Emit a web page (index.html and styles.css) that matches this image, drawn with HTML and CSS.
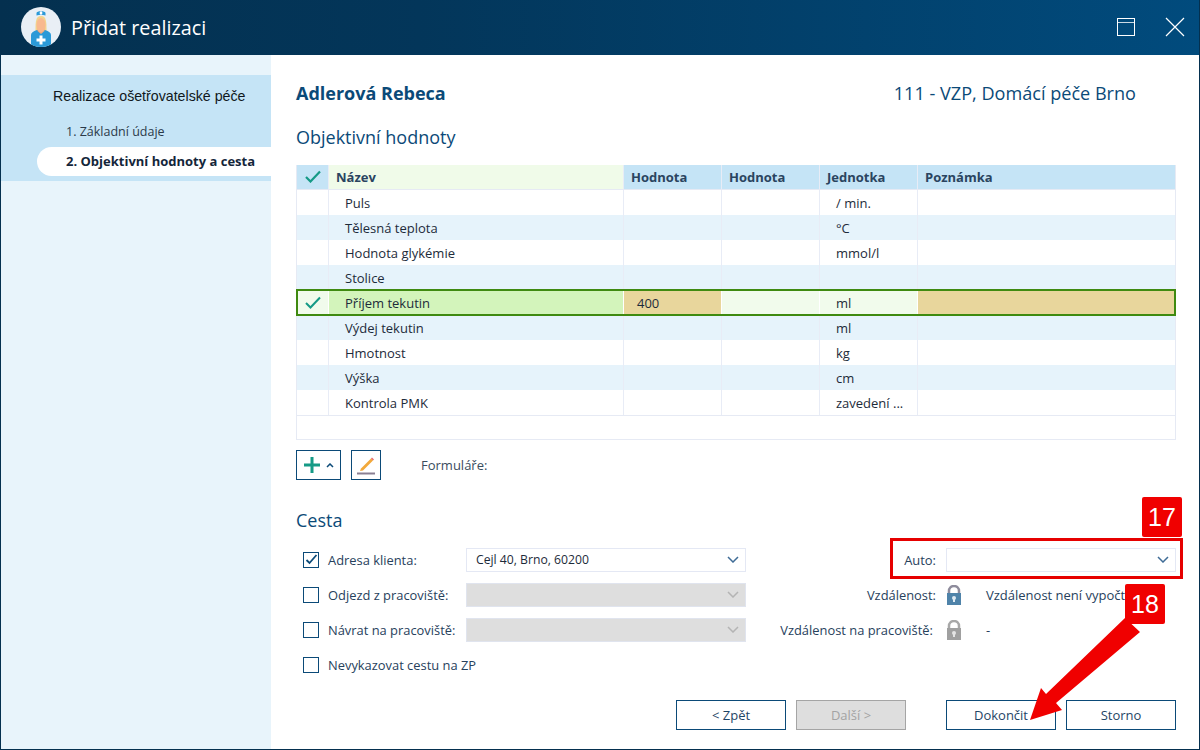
FILE: index.html
```html
<!DOCTYPE html>
<html lang="cs">
<head>
<meta charset="utf-8">
<title>Přidat realizaci</title>
<link rel="stylesheet" href="styles.css">
</head>
<body>
<div class="window">
  <header class="titlebar">
    <svg class="avatar" width="40" height="40" viewBox="0 0 40 40">
      <defs><clipPath id="round"><circle cx="20" cy="20" r="20"/></clipPath></defs>
      <circle cx="20" cy="20" r="20" fill="#e9eff5"/>
      <g clip-path="url(#round)">
        <path d="M14.500 24c0-9 0-15 5.500-15s5.500 6 5.500 15z" fill="#f3d48c"/>
        <path d="M10 28c0-2 2-4 6-5h8c4 1 6 3 6 5v12H10z" fill="#2b9ad8"/>
        <path d="M16.500 21h7v3l-3.500 3-3.500-3z" fill="#f3a97f"/>
        <ellipse cx="20" cy="18" rx="4.500" ry="7" fill="#f8b98f"/>
        <path d="M18.500 28.500h3v3h3v3h-3v3h-3v-3h-3v-3h3z" fill="#fff"/>
        <path d="M15.500 6c0-2.500 9-2.500 9 0v2.500c-3-1-6-1-9 0z" fill="#2b9ad8"/>
        <path d="M19 4.500h2v3h-2zM18.500 5.500h3v1h-3z" fill="#fff"/>
      </g>
    </svg>
    <h1 class="title">Přidat realizaci</h1>
    <div class="window-controls">
      <svg width="18" height="18" viewBox="0 0 18 18" fill="none" stroke="#fff">
        <rect x="0.500" y="0.500" width="17" height="17" stroke-width="1"/>
        <path d="M1 4.500h16" stroke-width="1" opacity=".8"/>
      </svg>
      <svg width="20" height="20" viewBox="0 0 20 20" fill="none" stroke="#fff" stroke-width="1.200">
        <path d="M1 1l18 18M19 1L1 19"/>
      </svg>
    </div>
  </header>

  <div class="body">
    <aside class="sidebar">
      <nav class="steps">
        <div class="steps-title">Realizace ošetřovatelské péče</div>
        <div class="step">1. Základní údaje</div>
        <div class="step step-active">2. Objektivní hodnoty a cesta</div>
      </nav>
    </aside>

    <main class="content">
      <div class="patient">
        <div class="patient-name">Adlerová Rebeca</div>
        <div class="patient-info">111 - VZP, Domácí péče Brno</div>
      </div>
      <h2 class="section-title">Objektivní hodnoty</h2>

      <div class="table">
        <div class="row row-head">
          <div class="cell cell-check">
            <svg width="16" height="13" viewBox="0 0 16 13" fill="none" stroke="#159a86" stroke-width="2.200"><path d="M1 7l4.500 4.500L15 1.500"/></svg>
          </div>
          <div class="cell cell-sorted">Název</div>
          <div class="cell">Hodnota</div>
          <div class="cell">Hodnota</div>
          <div class="cell">Jednotka</div>
          <div class="cell">Poznámka</div>
        </div>
        <div class="row"><div class="cell"></div><div class="cell cell-name">Puls</div><div class="cell"></div><div class="cell"></div><div class="cell cell-name">/ min.</div><div class="cell"></div></div>
        <div class="row row-alt"><div class="cell"></div><div class="cell cell-name">Tělesná teplota</div><div class="cell"></div><div class="cell"></div><div class="cell cell-name">°C</div><div class="cell"></div></div>
        <div class="row"><div class="cell"></div><div class="cell cell-name">Hodnota glykémie</div><div class="cell"></div><div class="cell"></div><div class="cell cell-name">mmol/l</div><div class="cell"></div></div>
        <div class="row row-alt"><div class="cell"></div><div class="cell cell-name">Stolice</div><div class="cell"></div><div class="cell"></div><div class="cell cell-name"></div><div class="cell"></div></div>
        <div class="row row-selected">
          <div class="cell cell-check cell-pale">
            <svg width="16" height="13" viewBox="0 0 16 13" fill="none" stroke="#159a86" stroke-width="2"><path d="M1 7l4.500 4.500L15 1.500"/></svg>
          </div>
          <div class="cell cell-name cell-green">Příjem tekutin</div>
          <div class="cell cell-value cell-tan">400</div>
          <div class="cell cell-pale"></div>
          <div class="cell cell-name cell-pale">ml</div>
          <div class="cell cell-tan"></div>
        </div>
        <div class="row row-alt"><div class="cell"></div><div class="cell cell-name">Výdej tekutin</div><div class="cell"></div><div class="cell"></div><div class="cell cell-name">ml</div><div class="cell"></div></div>
        <div class="row"><div class="cell"></div><div class="cell cell-name">Hmotnost</div><div class="cell"></div><div class="cell"></div><div class="cell cell-name">kg</div><div class="cell"></div></div>
        <div class="row row-alt"><div class="cell"></div><div class="cell cell-name">Výška</div><div class="cell"></div><div class="cell"></div><div class="cell cell-name">cm</div><div class="cell"></div></div>
        <div class="row"><div class="cell"></div><div class="cell cell-name">Kontrola PMK</div><div class="cell"></div><div class="cell"></div><div class="cell cell-name">zavedení ...</div><div class="cell"></div></div>
        <div class="table-empty"></div>
      </div>

      <div class="toolbar">
        <button class="tool tool-add" type="button">
          <svg width="18" height="18" viewBox="0 0 18 18" fill="none" stroke="#159a86" stroke-width="3"><path d="M9 1v16M1 9h16"/></svg>
          <svg width="8" height="5" viewBox="0 0 8 5" fill="none" stroke="#0b4a78" stroke-width="1.500"><path d="M1 4l3-3 3 3"/></svg>
        </button>
        <button class="tool tool-edit" type="button">
          <svg width="20" height="20" viewBox="0 0 20 20">
            <path d="M5 13.500L15 3.500l2 2-10 10-3 .5z" fill="#f2a93b"/>
            <path d="M15 3.500l1-1 2 2-1 1z" fill="#e8686e"/>
            <path d="M1 18.500h18" stroke="#8a7f92" stroke-width="2"/>
          </svg>
        </button>
        <span class="forms-label">Formuláře:</span>
      </div>

      <h2 class="section-title section-route">Cesta</h2>

      <div class="route">
        <label class="check-label"><span class="checkbox">
          <svg width="13" height="11" viewBox="0 0 13 11" fill="none" stroke="#0b4a78" stroke-width="1.800"><path d="M1.500 6l3 3 7-8"/></svg>
        </span>Adresa klienta:</label>
        <div class="select">Cejl 40, Brno, 60200<svg class="chev" width="12" height="7" viewBox="0 0 12 7" fill="none" stroke="#3f6c96" stroke-width="1.500"><path d="M1 1l5 5 5-5"/></svg></div>
        <div class="field-label">Auto:</div>
        <div class="select"><svg class="chev" width="12" height="7" viewBox="0 0 12 7" fill="none" stroke="#3f6c96" stroke-width="1.500"><path d="M1 1l5 5 5-5"/></svg></div>

        <label class="check-label"><span class="checkbox"></span>Odjezd z pracoviště:</label>
        <div class="select select-disabled"><svg class="chev" width="12" height="7" viewBox="0 0 12 7" fill="none" stroke="#b4b4b4" stroke-width="1.500"><path d="M1 1l5 5 5-5"/></svg></div>
        <div class="field-label">Vzdálenost:</div>
        <div class="lock-value">
          <svg class="lock" width="16" height="20" viewBox="0 0 16 20"><path d="M3 9V6a5 5 0 0 1 10 0v3" fill="none" stroke="#8e8c9c" stroke-width="2.500"/><rect x="1" y="8" width="14" height="12" fill="#4f83a9"/><circle cx="8" cy="13" r="2" fill="#dfeaf2"/><path d="M7 13h2v4H7z" fill="#dfeaf2"/></svg>
          <span>Vzdálenost není vypočtena</span>
        </div>

        <label class="check-label"><span class="checkbox"></span>Návrat na pracoviště:</label>
        <div class="select select-disabled"><svg class="chev" width="12" height="7" viewBox="0 0 12 7" fill="none" stroke="#b4b4b4" stroke-width="1.500"><path d="M1 1l5 5 5-5"/></svg></div>
        <div class="field-label field-label-tight">Vzdálenost na pracoviště:</div>
        <div class="lock-value">
          <svg class="lock" width="16" height="20" viewBox="0 0 16 20"><path d="M3 9V6a5 5 0 0 1 10 0v3" fill="none" stroke="#a8a8a8" stroke-width="2.500"/><rect x="1" y="8" width="14" height="12" fill="#a0a0a0"/><circle cx="8" cy="13" r="2" fill="#e4e4e4"/><path d="M7 13h2v4H7z" fill="#e4e4e4"/></svg>
          <span>-</span>
        </div>

        <label class="check-label check-wide"><span class="checkbox"></span>Nevykazovat cestu na ZP</label>
      </div>

      <div class="actions">
        <button class="btn" type="button">&lt; Zpět</button>
        <button class="btn btn-disabled" type="button">Další &gt;</button>
        <button class="btn btn-finish" type="button">Dokončit</button>
        <button class="btn" type="button">Storno</button>
      </div>
    </main>
  </div>

  <div class="note-box"></div>
  <div class="note-badge note-17">17</div>
  <svg class="note-arrow" width="1200" height="750" viewBox="0 0 1200 750">
    <polygon points="1030,720 1041,688 1046,694 1125,618 1140,632 1056,703 1062,710" fill="#f00000"/>
  </svg>
  <div class="note-badge note-18">18</div>
</div>
</body>
</html>
```
FILE: styles.css
```css
* { box-sizing: border-box; }
html, body { margin: 0; padding: 0; }
body {
  font-family: "Open Sans", sans-serif;
  font-size: 13px;
  color: #1d2b3a;
  background: #fff;
}
.window {
  position: relative;
  width: 1200px;
  height: 750px;
  overflow: hidden;
  display: flex;
  flex-direction: column;
  border-left: 1px solid #04304f;
  border-right: 1px solid #04304f;
  border-bottom: 1px solid #04304f;
}
.titlebar {
  flex: 0 0 55px;
  margin: 0 -1px;
  display: flex;
  align-items: center;
  padding: 0 15px 1px 21px;
  background: linear-gradient(90deg, #04304f 0%, #03365a 35%, #014b7d 100%);
}
.avatar { flex: none; }
.title {
  margin: 0 0 0 10px;
  font-size: 19.800px;
  font-weight: 400;
  color: #fff;
}
.window-controls {
  margin-left: auto;
  display: flex;
  align-items: center;
  gap: 30px;
}
.body { flex: 1; display: flex; min-height: 0; }
.sidebar {
  flex: 0 0 270px;
  padding-top: 20px;
  background: #e8f4fb;
}
.steps {
  height: 106px;
  padding: 13px 0 0 36px;
  background: #c5e4f6;
}
.steps-title {
  padding-left: 16px;
  height: 17px;
  line-height: 17px;
  font-family: "Liberation Sans", sans-serif;
  font-size: 14.200px;
  color: #101820;
}
.step {
  margin-top: 18px;
  padding-left: 29px;
  height: 18px;
  line-height: 18px;
  font-size: 12.500px;
  color: #2b3a4a;
}
.step-active {
  margin-top: 6px;
  height: 29px;
  line-height: 29px;
  border-radius: 15px 0 0 15px;
  background: #fff;
  font-weight: 700;
  font-size: 13px;
  color: #14263a;
}
.content {
  flex: 1;
  min-width: 0;
  padding: 25px 23px 0 25px;
  display: flex;
  flex-direction: column;
}
.patient {
  display: flex;
  justify-content: space-between;
  align-items: center;
  height: 26px;
  padding-right: 40px;
}
.patient-name {
  font-size: 18px;
  font-weight: 700;
  color: #0b4a78;
}
.patient-info {
  font-size: 18.100px;
  color: #0b4a78;
}
.section-title {
  margin: 19px 0 0;
  height: 24px;
  line-height: 24px;
  font-size: 18px;
  font-weight: 400;
  color: #0b4a78;
}
.table {
  margin-top: 16px;
  height: 275px;
  flex: none;
  border: 1px solid #e6eaf4;
  border-top: 0;
  background: #fff;
}
.row {
  display: grid;
  grid-template-columns: 32px 295px 98px 98px 98px 1fr;
  height: 25px;
  position: relative;
}
.row-head {
  height: 25px;
  background: #c5e4f6;
  border-bottom: 1px solid #e6eaf4;
  font-weight: 700;
  color: #2a4460;
}
.row-alt { background: #e6f3fb; }
.cell {
  display: flex;
  align-items: center;
  padding-left: 7px;
  border-right: 1px solid #e8ecf6;
  overflow: hidden;
  white-space: nowrap;
}
.cell:last-child { border-right: 0; }
.row-head .cell { padding-bottom: 1px; }
.cell-check { justify-content: center; padding-left: 0; }
.cell-sorted { background: #f0fbe9; }
.cell-name { padding-left: 16px; }
.cell-value { padding-left: 13px; }
.row-selected {
  outline: 2px solid #3f8a10;
  outline-offset: -1px;
  z-index: 1;
}
.row-selected .cell { border-right-color: #fff; }
.cell-pale { background: #f1fbec; }
.cell-green { background: #d3f4bb; }
.cell-tan { background: #e8d69c; }
.table-empty {
  height: 24px;
  border-top: 1px solid #e6eaf4;
}
.toolbar {
  margin-top: 10px;
  height: 30px;
  display: flex;
  align-items: center;
}
.tool {
  height: 30px;
  padding: 0;
  background: #fff;
  border: 1px solid #0b4a78;
  display: flex;
  align-items: center;
  justify-content: center;
}
.tool-add { width: 45px; gap: 5px; }
.tool-edit { width: 30px; margin-left: 10px; }
.forms-label {
  margin-left: 40px;
  color: #3a4c5e;
}
.section-route { margin-top: 28px; }
.route {
  margin-top: 10px;
  display: grid;
  grid-template-columns: 170px 280px 200px 230px;
  grid-auto-rows: 35px;
  align-items: center;
}
.check-label {
  display: flex;
  align-items: center;
  padding-left: 7px;
  font-size: 12.900px;
  color: #27415c;
}
.check-wide { grid-column: 1 / span 2; }
.checkbox {
  flex: none;
  width: 16px;
  height: 16px;
  margin-right: 9px;
  background: #fff;
  border: 1px solid #0b4a78;
  display: flex;
  align-items: center;
  justify-content: center;
}
.select {
  height: 24px;
  padding-left: 9px;
  background: #fff;
  border: 1px solid #e4e8f4;
  display: flex;
  align-items: center;
  justify-content: space-between;
  font-size: 12.200px;
  color: #1d2b3a;
}
.chev { margin-left: auto; margin-right: 6px; flex: none; }
.select-disabled { background: #dedede; border-color: #e0e4ee; }
.field-label {
  text-align: right;
  padding-right: 10px;
  font-size: 12.900px;
  color: #27415c;
}
.field-label-tight { padding-right: 13px; white-space: nowrap; }
.lock-value {
  display: flex;
  align-items: center;
  color: #27415c;
  white-space: nowrap;
}
.lock { flex: none; margin-right: 24px; }
.actions {
  margin-top: 18px;
  display: flex;
  justify-content: flex-end;
  gap: 10px;
}
.btn {
  width: 110px;
  height: 30px;
  padding: 0;
  background: #fff;
  border: 1px solid #0b4a78;
  font-family: "Open Sans", sans-serif;
  font-size: 13px;
  color: #1f4566;
}
.btn-disabled {
  background: #dedede;
  border-color: #a5a5a5;
  color: #a3a3a3;
}
.btn-finish { margin-left: 30px; }
.note-box {
  position: absolute;
  left: 889px;
  top: 538px;
  width: 293px;
  height: 41px;
  border: 3px solid #e60000;
}
.note-badge {
  position: absolute;
  width: 40px;
  height: 40px;
  border-radius: 2px;
  background: #f00000;
  color: #fff;
  font-family: "Liberation Sans", sans-serif;
  font-size: 25px;
  line-height: 40px;
  text-align: center;
}
.note-17 { left: 1141px; top: 497px; }
.note-18 { left: 1124px; top: 584px; }
.note-arrow {
  position: absolute;
  left: -1px;
  top: 0;
  pointer-events: none;
}
```
